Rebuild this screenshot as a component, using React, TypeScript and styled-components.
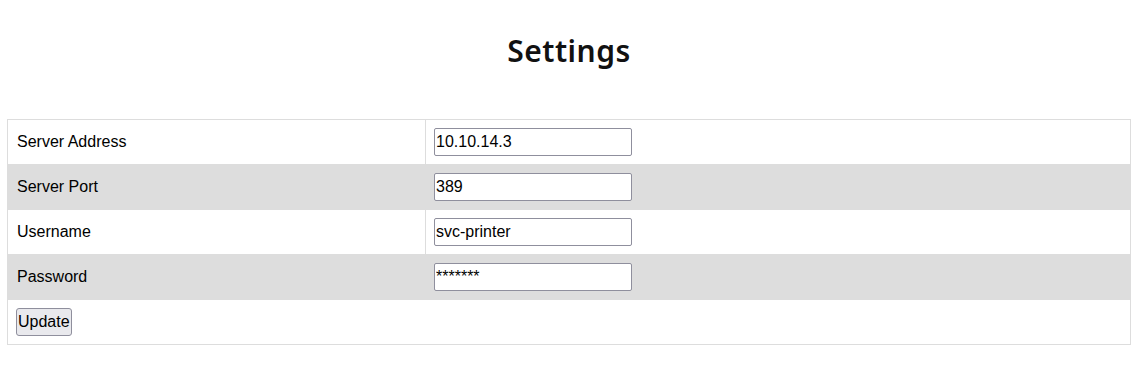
import React from "react";
import styled, { createGlobalStyle } from "styled-components";

const Global = createGlobalStyle`
  html, body { margin: 0; padding: 0; background: #fff; }
  body { margin: 0 17px 0 7px; font-family: "Liberation Sans", Arial, sans-serif; color: #000; }
`;

const Title = styled.h1`
  margin: 0;
  height: 119px;
  padding-top: 31px;
  box-sizing: border-box;
  text-align: center;
  font-family: "Noto Sans", "Open Sans", sans-serif;
  font-weight: 600;
  font-size: 30px;
  line-height: 40px;
  letter-spacing: 0.5px;
  color: #111;
`;

const Table = styled.table`
  width: 100%;
  border-collapse: collapse;
  border: 1px solid #ddd;
  table-layout: fixed;
`;

const Row = styled.tr<{ $shade?: boolean }>`
  background: ${(p) => (p.$shade ? "#dddddd" : "#ffffff")};
  height: 45px;
`;

const Cell = styled.td<{ $label?: boolean }>`
  border: 1px solid #ddd;
  padding: 0 8px 0 ${(p) => (p.$label ? "9px" : "8px")};
  font-size: 16px;
  vertical-align: middle;
  height: 44px;
  box-sizing: border-box;
`;

const Input = styled.input`
  box-sizing: border-box;
  width: 198px;
  height: 28px;
  padding: 0 1px;
  border: 1px solid #8f8f9d;
  border-radius: 2px;
  font-family: "Liberation Sans", Arial, sans-serif;
  font-size: 16px;
  color: #000;
  background: #fff;
  display: block;
`;

const Button = styled.button`
  box-sizing: border-box;
  height: 28px;
  padding: 0 1px;
  border: 1px solid #8f8f9d;
  border-radius: 3px;
  background: #e9e9ed;
  font-family: "Liberation Sans", Arial, sans-serif;
  font-size: 16px;
  color: #000;
  display: block;
`;

const fields = [
  { label: "Server Address", value: "10.10.14.3" },
  { label: "Server Port", value: "389" },
  { label: "Username", value: "svc-printer" },
  { label: "Password", value: "*******" },
];

export default function App() {
  return (
    <>
      <Global />
      <Title>Settings</Title>
      <Table>
        <colgroup>
          <col style={{ width: "418px" }} />
          <col />
        </colgroup>
        <tbody>
          {fields.map((f, i) => (
            <Row key={f.label} $shade={i % 2 === 1}>
              <Cell $label>{f.label}</Cell>
              <Cell>
                <Input type="text" defaultValue={f.value} />
              </Cell>
            </Row>
          ))}
          <Row>
            <Cell colSpan={2}>
              <Button>Update</Button>
            </Cell>
          </Row>
        </tbody>
      </Table>
    </>
  );
}
